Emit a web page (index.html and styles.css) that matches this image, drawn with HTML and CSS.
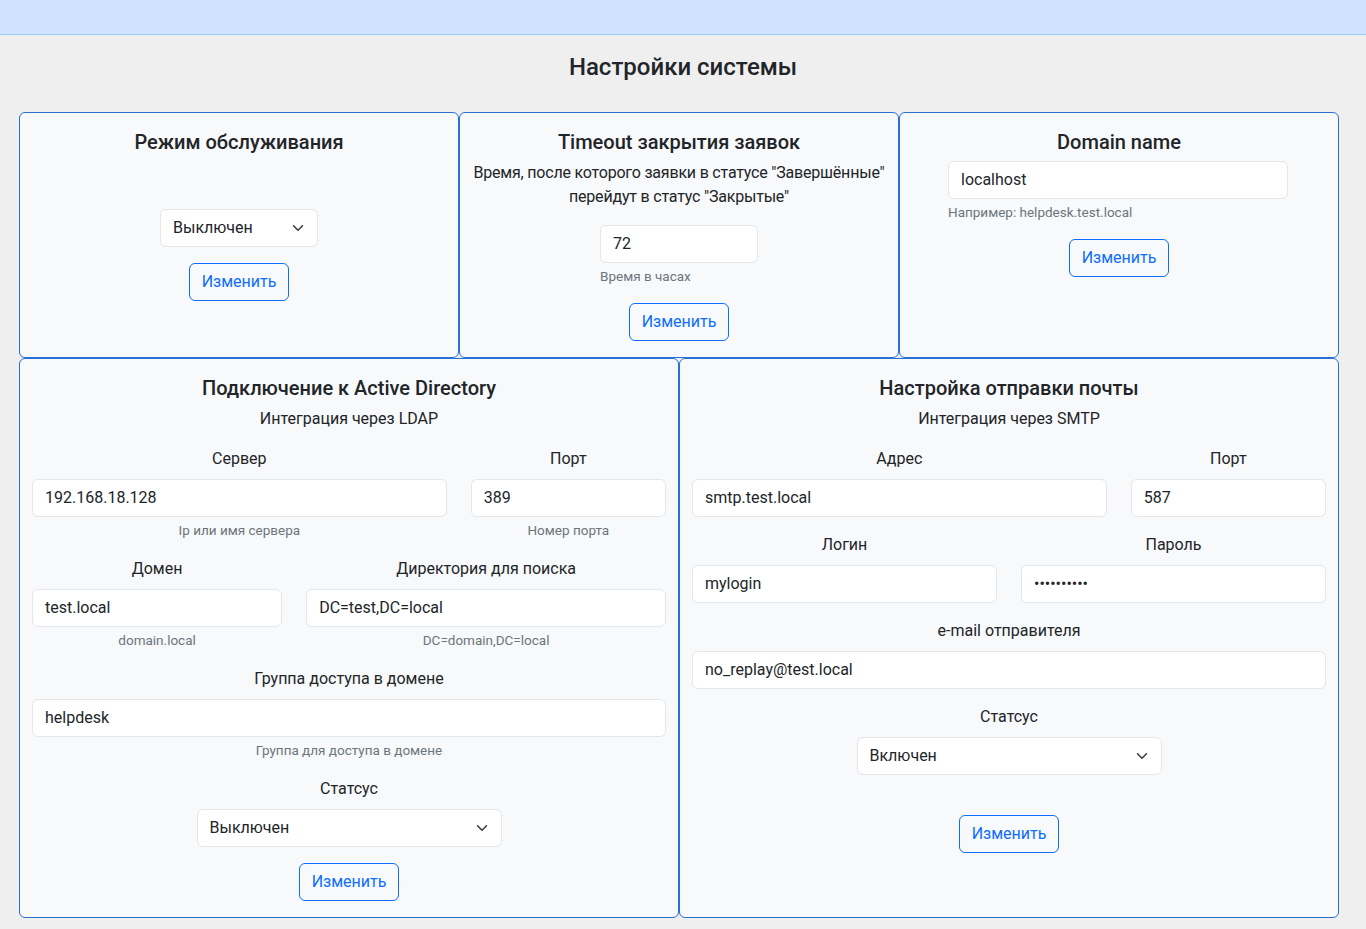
FILE: index.html
```html
<!DOCTYPE html>
<html lang="ru">
<head>
<meta charset="utf-8">
<title>Настройки системы</title>
<link rel="stylesheet" href="styles.css">
</head>
<body>
<header class="topbar"></header>
<main class="page">
  <h1 class="page-title">Настройки системы</h1>
  <div class="settings">
    <div class="row-top">
      <section class="card">
        <h2 class="card-title">Режим обслуживания</h2>
        <div class="select-wrap select-small maint-select">
          <select class="form-select"><option>Выключен</option><option>Включен</option></select>
          <svg class="chev" viewBox="0 0 16 16" width="16" height="12"><path d="m2 5 6 6 6-6" fill="none" stroke="#343a40" stroke-width="2" stroke-linecap="round" stroke-linejoin="round"/></svg>
        </div>
        <button class="btn">Изменить</button>
      </section>
      <section class="card">
        <h2 class="card-title">Timeout закрытия заявок</h2>
        <p class="card-text">Время, после которого заявки в статусе "Завершённые"<br>перейдут в статус "Закрытые"</p>
        <div class="field-small">
          <input class="form-control" type="text" value="72">
          <div class="form-text left">Время в часах</div>
        </div>
        <button class="btn">Изменить</button>
      </section>
      <section class="card">
        <h2 class="card-title">Domain name</h2>
        <div class="field-domain">
          <input class="form-control" type="text" value="localhost">
          <div class="form-text left">Например: helpdesk.test.local</div>
        </div>
        <button class="btn">Изменить</button>
      </section>
    </div>
    <div class="row-bottom">
      <section class="card">
        <h2 class="card-title">Подключение к Active Directory</h2>
        <p class="card-sub">Интеграция через LDAP</p>
        <div class="form-grid">
          <div class="fg span8">
            <label class="form-label">Сервер</label>
            <input class="form-control" type="text" value="192.168.18.128">
            <div class="form-text">Ip или имя сервера</div>
          </div>
          <div class="fg span4">
            <label class="form-label">Порт</label>
            <input class="form-control" type="text" value="389">
            <div class="form-text">Номер порта</div>
          </div>
          <div class="fg span5">
            <label class="form-label">Домен</label>
            <input class="form-control" type="text" value="test.local">
            <div class="form-text">domain.local</div>
          </div>
          <div class="fg span7">
            <label class="form-label">Директория для поиска</label>
            <input class="form-control" type="text" value="DC=test,DC=local">
            <div class="form-text">DC=domain,DC=local</div>
          </div>
          <div class="fg span12">
            <label class="form-label">Группа доступа в домене</label>
            <input class="form-control" type="text" value="helpdesk">
            <div class="form-text">Группа для доступа в домене</div>
          </div>
          <div class="fg span6c">
            <label class="form-label">Статсус</label>
            <div class="select-wrap">
              <select class="form-select"><option>Выключен</option><option>Включен</option></select>
              <svg class="chev" viewBox="0 0 16 16" width="16" height="12"><path d="m2 5 6 6 6-6" fill="none" stroke="#343a40" stroke-width="2" stroke-linecap="round" stroke-linejoin="round"/></svg>
            </div>
          </div>
        </div>
        <button class="btn">Изменить</button>
      </section>
      <section class="card">
        <h2 class="card-title">Настройка отправки почты</h2>
        <p class="card-sub">Интеграция через SMTP</p>
        <div class="form-grid">
          <div class="fg span8">
            <label class="form-label">Адрес</label>
            <input class="form-control" type="text" value="smtp.test.local">
          </div>
          <div class="fg span4">
            <label class="form-label">Порт</label>
            <input class="form-control" type="text" value="587">
          </div>
          <div class="fg span6">
            <label class="form-label">Логин</label>
            <input class="form-control" type="text" value="mylogin">
          </div>
          <div class="fg span6">
            <label class="form-label">Пароль</label>
            <input class="form-control" type="password" value="mypassword">
          </div>
          <div class="fg span12">
            <label class="form-label">e-mail отправителя</label>
            <input class="form-control" type="text" value="no_replay@test.local">
          </div>
          <div class="fg span6c fg-last">
            <label class="form-label">Статсус</label>
            <div class="select-wrap">
              <select class="form-select"><option>Включен</option><option>Выключен</option></select>
              <svg class="chev" viewBox="0 0 16 16" width="16" height="12"><path d="m2 5 6 6 6-6" fill="none" stroke="#343a40" stroke-width="2" stroke-linecap="round" stroke-linejoin="round"/></svg>
            </div>
          </div>
        </div>
        <button class="btn">Изменить</button>
      </section>
    </div>
  </div>
</main>
</body>
</html>
```
FILE: styles.css
```css
* { box-sizing: border-box; }

body {
  margin: 0;
  background: #efefef;
  color: #212529;
  font-family: "Segoe UI", Roboto, "Noto Sans", sans-serif;
  font-size: 16px;
  line-height: 1.5;
}

.topbar {
  height: 35px;
  background: #cfe2ff;
  border-bottom: 1px solid #9ec5fe;
}

.page {
  padding-top: 18px;
}

.page-title {
  margin: 0 0 30px;
  text-align: center;
  font-size: 24px;
  font-weight: 500;
  line-height: 1.2;
}

.settings {
  width: 1320px;
  margin-left: 19px;
}

.row-top {
  display: grid;
  grid-template-columns: repeat(3, 440px);
}

.row-bottom {
  display: grid;
  grid-template-columns: repeat(2, 660px);
}

.card {
  background: #f8f9fa;
  border: 1px solid #2a6fd4;
  border-radius: 6px;
  padding: 17px 12px 16px;
  text-align: center;
}

.card-title {
  margin: 0 0 7px;
  font-size: 20px;
  font-weight: 500;
  line-height: 1.2;
}

.card-text {
  margin: 0 0 16px;
  letter-spacing: -0.2px;
}

.card-sub {
  margin: 0 0 16px;
}

.form-control,
.form-select {
  display: block;
  width: 100%;
  height: 38px;
  padding: 6px 12px;
  font: inherit;
  color: #212529;
  background: #fff;
  border: 1px solid #e3e6ea;
  border-radius: 6px;
  text-align: left;
  outline: none;
}

.form-select {
  appearance: none;
  -webkit-appearance: none;
  padding-right: 36px;
}

.select-wrap {
  position: relative;
}

.chev {
  position: absolute;
  right: 12px;
  top: 13px;
  pointer-events: none;
}

.maint-select {
  width: 158px;
  margin: 55px auto 16px;
}

.field-small {
  width: 158px;
  margin: 0 auto 16px;
}

.field-domain {
  width: 340px;
  margin: 0 auto 16px 36px;
}

.form-text {
  margin-top: 3px;
  font-size: 13.5px;
  line-height: 21px;
  color: #6c757d;
}

.form-text.left {
  text-align: left;
}

.form-grid {
  display: grid;
  grid-template-columns: repeat(12, 1fr);
  column-gap: 24px;
  text-align: center;
}

.fg {
  margin-bottom: 16px;
}

.fg-last {
  margin-bottom: 40px;
}

.span4 { grid-column: span 4; }
.span5 { grid-column: span 5; }
.span6 { grid-column: span 6; }
.span7 { grid-column: span 7; }
.span8 { grid-column: span 8; }
.span12 { grid-column: span 12; }
.span6c { grid-column: 4 / span 6; }

.form-label {
  display: block;
  margin-bottom: 8px;
}

.btn {
  display: inline-block;
  height: 38px;
  padding: 6px 12px;
  font: inherit;
  color: #0d6efd;
  background: transparent;
  border: 1px solid #0d6efd;
  border-radius: 6px;
  cursor: pointer;
}
```
